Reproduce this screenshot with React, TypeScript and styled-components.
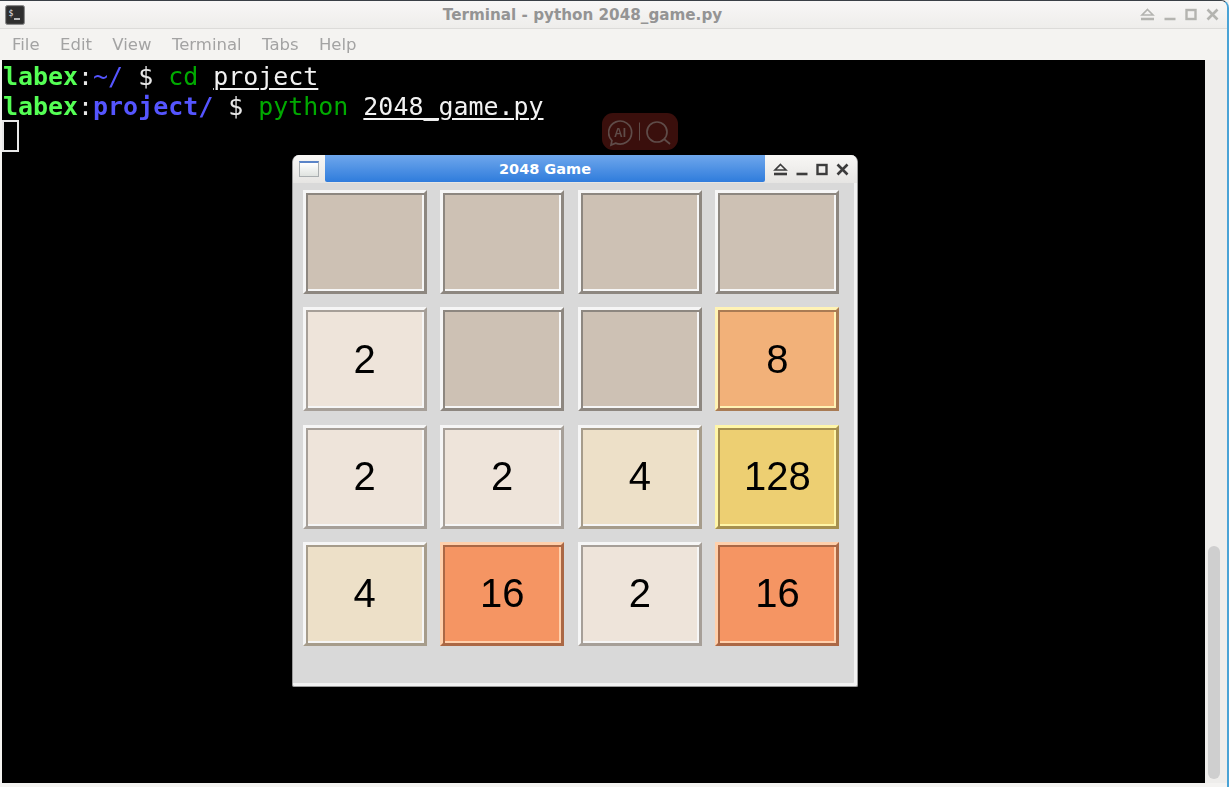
import React from "react";
import styled, { createGlobalStyle } from "styled-components";

const GlobalStyle = createGlobalStyle`
  html, body {
    margin: 0;
    padding: 0;
    height: 100%;
    overflow: hidden;
    background: #f4f3f1;
  }
  * {
    box-sizing: border-box;
  }
`;

const Desktop = styled.div`
  position: relative;
  width: 1229px;
  height: 787px;
  display: flex;
  flex-direction: column;
  background: #f4f3f1;
  border-top: 1px solid #3a4046;
  border-right: 2px solid #4aa3d6;
  border-top-right-radius: 8px;
  overflow: hidden;
  filter: blur(0.35px);
`;

const TitleBar = styled.div`
  height: 28px;
  display: flex;
  align-items: center;
  padding: 0 8px 0 5px;
  background: linear-gradient(#f8f7f6, #eeedeb);
  border-bottom: 1px solid #dcdbd9;
`;

const TitleText = styled.div`
  flex: 1;
  text-align: center;
  font: bold 15.2px "DejaVu Sans", sans-serif;
  color: #949494;
`;

const WindowButtons = styled.div<{ $dim?: boolean }>`
  display: flex;
  align-items: center;
  gap: ${(p) => (p.$dim ? "9px" : "8px")};
  color: ${(p) => (p.$dim ? "#b4b4b0" : "#3c3c3c")};
`;

const MenuBar = styled.div`
  height: 31px;
  display: flex;
  align-items: center;
  padding: 0 0 0 12px;
  gap: 20.4px;
  font: 16.5px "DejaVu Sans", sans-serif;
  color: #a3a3a3;
`;

const Workspace = styled.div`
  flex: 1;
  display: flex;
  min-height: 0;
  padding: 0 0 4px 2px;
`;

const Screen = styled.div`
  flex: 1;
  background: #000;
  padding-top: 2px;
  font: 24.95px/30px "DejaVu Sans Mono", monospace;
  color: #e6e6e6;
  white-space: pre;
`;

const Line = styled.div`
  height: 30px;
  padding-left: 1px;
`;

const UserName = styled.span`
  color: #55ff55;
  font-weight: bold;
`;

const Path = styled.span<{ $bold?: boolean }>`
  color: #5555ff;
  font-weight: ${(p) => (p.$bold ? "bold" : "normal")};
`;

const Command = styled.span`
  color: #00aa00;
`;

const Argument = styled.span`
  color: #f2f2f2;
  text-decoration: underline;
  text-decoration-thickness: 2px;
  text-underline-offset: 3px;
`;

const Cursor = styled.div`
  width: 17px;
  height: 32px;
  margin-top: -2px;
  border: 2px solid #e8e8e8;
`;

const ScrollTrack = styled.div`
  width: 22px;
  padding: 486px 7px 4px 3px;
  background: #eeedeb;
`;

const ScrollThumb = styled.div`
  height: 100%;
  border-radius: 6px;
  background: #cfcfcf;
`;

const Pill = styled.div`
  position: absolute;
  left: 602px;
  top: 112px;
  width: 76px;
  height: 37px;
  display: flex;
  align-items: center;
  justify-content: center;
  border-radius: 11px;
  background: #3a0f0c;
`;

const GameWindow = styled.div`
  position: absolute;
  left: 292px;
  top: 154px;
  width: 566px;
  height: 532px;
  display: flex;
  flex-direction: column;
  background: #d9d9d9;
  border: 1px solid #9a9a9a;
  border-top: none;
  border-radius: 7px 7px 2px 2px;
  box-shadow: inset -3px -3px 0 #f2f2f2;
  overflow: hidden;
`;

const GameTitleBar = styled.div`
  height: 28px;
  flex: none;
  display: flex;
  align-items: stretch;
  background: linear-gradient(#f8f7f5, #e6e5e3);
`;

const MenuSlot = styled.div`
  width: 32px;
  display: flex;
  align-items: center;
  justify-content: center;
`;

const MiniWindow = styled.div`
  width: 20px;
  height: 16px;
  border: 1px solid #a9aeb0;
  border-top: 2px solid #5a84c8;
  background: linear-gradient(#ffffff, #dfe3e0);
`;

const GameTitle = styled.div`
  width: 440px;
  margin-bottom: 1px;
  display: flex;
  align-items: center;
  justify-content: center;
  border-radius: 0 0 2px 2px;
  background: linear-gradient(#6fa7ec, #2f7cdc);
  color: #ffffff;
  font: bold 14.5px "DejaVu Sans", sans-serif;
`;

const GameButtons = styled.div`
  flex: 1;
  display: flex;
  align-items: center;
  justify-content: center;
`;

const Board = styled.div`
  width: 537px;
  height: 456px;
  margin: 7px 0 0 9.5px;
  display: grid;
  grid-template-columns: repeat(4, 124px);
  grid-template-rows: repeat(4, 104px);
  column-gap: 13.67px;
  row-gap: 13.33px;
`;

const tileColors: Record<number, string> = {
  0: "#cdc1b4",
  2: "#eee4da",
  4: "#ede0c8",
  8: "#f2b179",
  16: "#f59563",
  128: "#edcf72",
};

const lightEdges: Record<number, string> = {
  0: "#f6f6f6",
  2: "#f6f6f6",
  4: "#f6f6f6",
  8: "#fff3b5",
  16: "#ffd0ac",
  128: "#fff6a8",
};

const darkEdges: Record<number, string> = {
  0: "#8d8780",
  2: "#a69f98",
  4: "#a69c8b",
  8: "#a97b54",
  16: "#ab6845",
  128: "#a6904f",
};

const Tile = styled.div<{ $value: number }>`
  display: flex;
  align-items: center;
  justify-content: center;
  background: ${(p) => tileColors[p.$value]};
  border: 3px solid;
  border-color: ${(p) =>
    `${lightEdges[p.$value]} ${darkEdges[p.$value]} ${darkEdges[p.$value]} ${lightEdges[p.$value]}`};
  box-shadow: inset 2px 2px 0 ${(p) => darkEdges[p.$value]},
    inset -2px -2px 0 ${(p) => lightEdges[p.$value]};
  font: 40px "Liberation Sans", Arial, sans-serif;
  color: #000;
`;

const board = [
  [0, 0, 0, 0],
  [2, 0, 0, 8],
  [2, 2, 4, 128],
  [4, 16, 2, 16],
];

const TerminalIcon = () => (
  <svg width="20" height="20" viewBox="0 0 20 20">
    <rect x="0.5" y="0.5" width="19" height="19" rx="2" fill="#3b3b3b" stroke="#8a8a8a" />
    <rect x="2" y="2" width="16" height="16" rx="1" fill="#2e2e2e" />
    <text x="3.5" y="10.5" fontFamily="DejaVu Sans Mono" fontSize="8" fill="#e8e8e8">
      $
    </text>
    <path d="M9 14h6" stroke="#e8e8e8" strokeWidth="1.4" />
  </svg>
);

const ShadeIcon = () => (
  <svg width="15" height="13" viewBox="0 0 15 13" fill="none" stroke="currentColor">
    <path d="M7.5 1.5 13 7H2Z" strokeWidth="1.6" />
    <path d="M1 11h13" strokeWidth="2.6" />
  </svg>
);

const MinIcon = () => (
  <svg width="12" height="13" viewBox="0 0 12 13" fill="none" stroke="currentColor">
    <path d="M0.5 11h11" strokeWidth="2.6" />
  </svg>
);

const MaxIcon = () => (
  <svg width="12" height="13" viewBox="0 0 12 13" fill="none" stroke="currentColor">
    <rect x="1.5" y="2" width="9" height="9" strokeWidth="2.4" />
  </svg>
);

const CloseIcon = () => (
  <svg width="13" height="13" viewBox="0 0 13 13" fill="none" stroke="currentColor">
    <path d="M1.5 1.5l10 10M11.5 1.5l-10 10" strokeWidth="2.6" />
  </svg>
);

const PillIcons = () => (
  <svg width="64" height="32" viewBox="0 0 64 32" fill="none" stroke="#5f4c49" strokeWidth="1.7">
    <path d="M3.9 24.6A11.5 11.5 0 1 1 7.5 27.1L3 29Z" />
    <text x="12" y="21" fontFamily="Liberation Sans" fontSize="12" fontWeight="bold" textAnchor="middle" fill="#5f4c49" stroke="none">
      AI
    </text>
    <path d="M31.5 6.5v18" strokeWidth="1" />
    <circle cx="49" cy="16" r="10" />
    <path d="M56 23l6 5" />
  </svg>
);

export default function App() {
  return (
    <>
      <GlobalStyle />
      <Desktop>
        <TitleBar>
          <TerminalIcon />
          <TitleText>Terminal - python 2048_game.py</TitleText>
          <WindowButtons $dim>
            <ShadeIcon />
            <MinIcon />
            <MaxIcon />
            <CloseIcon />
          </WindowButtons>
        </TitleBar>
        <MenuBar>
          <span>File</span>
          <span>Edit</span>
          <span>View</span>
          <span>Terminal</span>
          <span>Tabs</span>
          <span>Help</span>
        </MenuBar>
        <Workspace>
          <Screen>
            <Line>
              <UserName>labex</UserName>:<Path>~/</Path> $ <Command>cd</Command> <Argument>project</Argument>
            </Line>
            <Line>
              <UserName>labex</UserName>:<Path $bold>project/</Path> $ <Command>python</Command>{" "}
              <Argument>2048_game.py</Argument>
            </Line>
            <Cursor />
          </Screen>
          <ScrollTrack>
            <ScrollThumb />
          </ScrollTrack>
        </Workspace>
        <Pill>
          <PillIcons />
        </Pill>
        <GameWindow>
          <GameTitleBar>
            <MenuSlot>
              <MiniWindow />
            </MenuSlot>
            <GameTitle>2048 Game</GameTitle>
            <GameButtons>
              <WindowButtons>
                <ShadeIcon />
                <MinIcon />
                <MaxIcon />
                <CloseIcon />
              </WindowButtons>
            </GameButtons>
          </GameTitleBar>
          <Board>
            {board.flat().map((value, i) => (
              <Tile key={i} $value={value}>
                {value > 0 ? value : ""}
              </Tile>
            ))}
          </Board>
        </GameWindow>
      </Desktop>
    </>
  );
}
